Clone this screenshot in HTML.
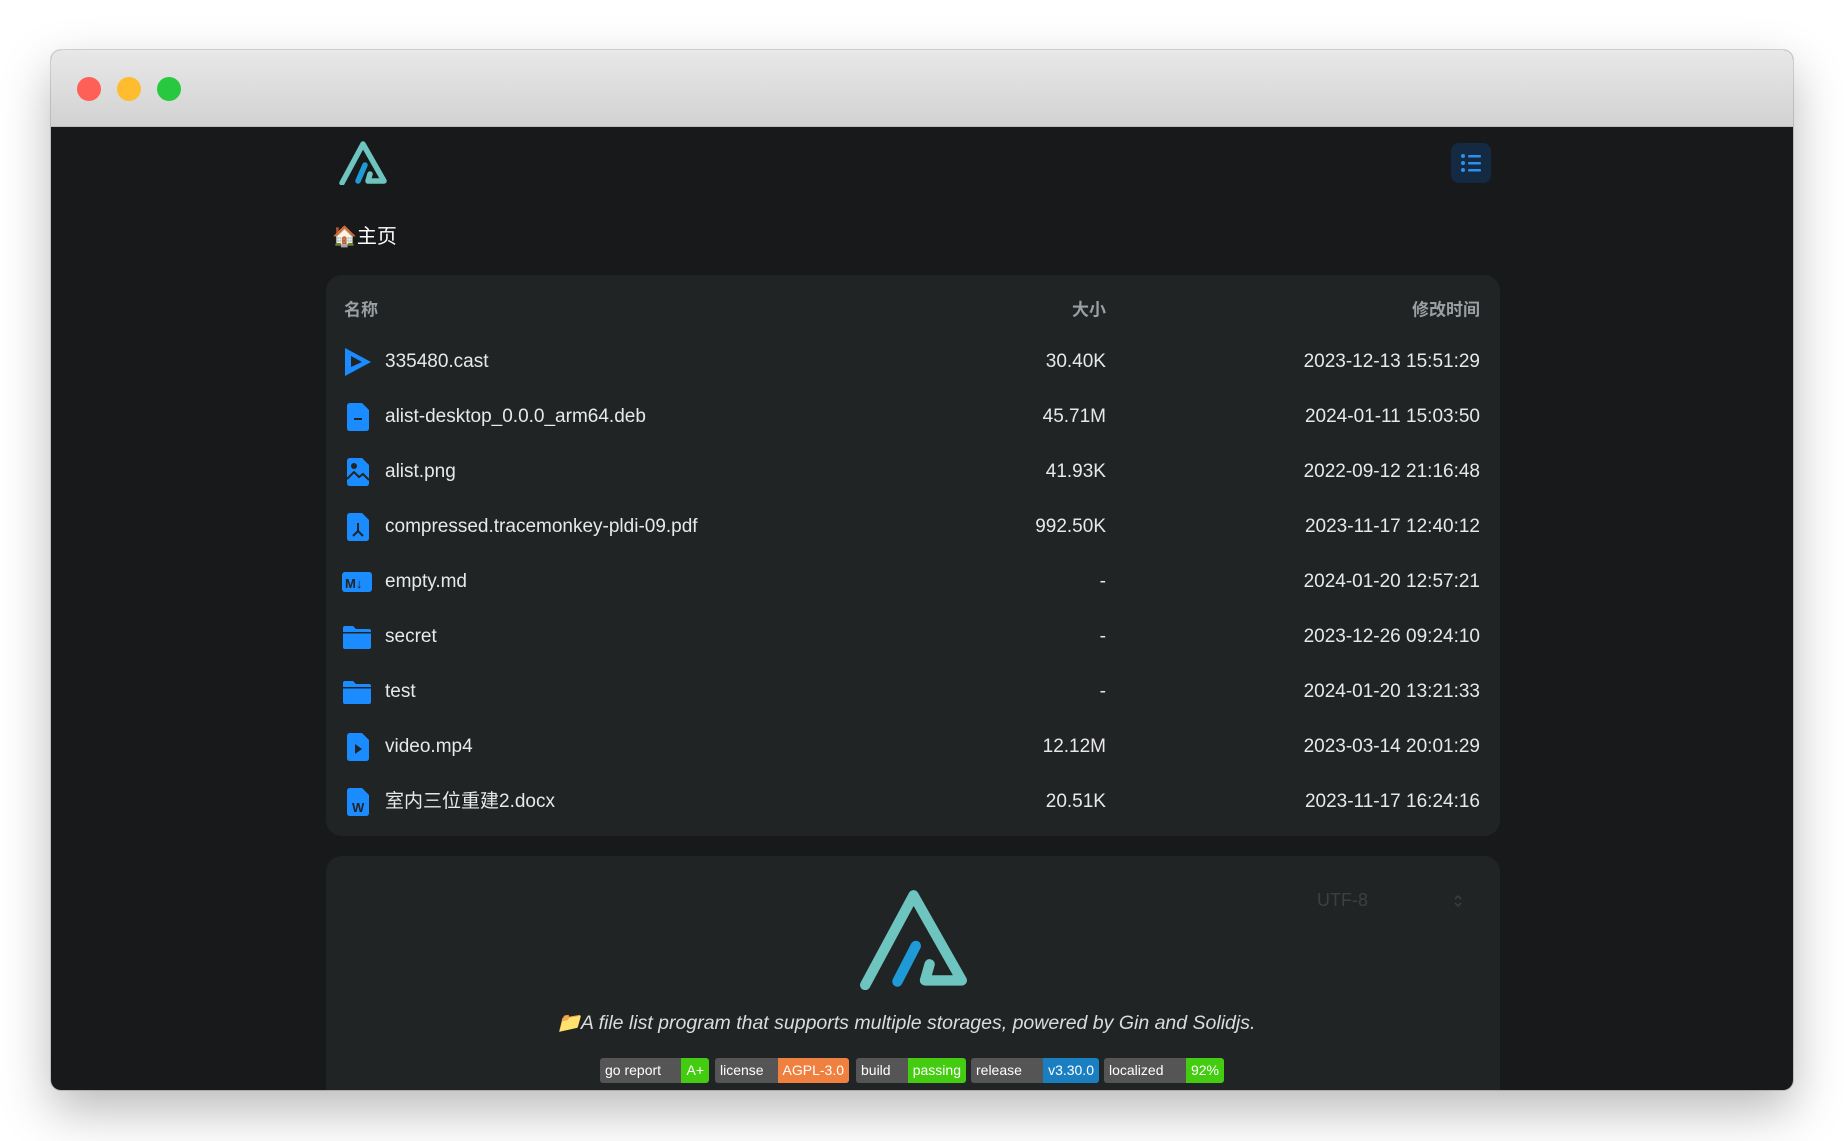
<!DOCTYPE html>
<html><head><meta charset="utf-8"><style>
*{margin:0;padding:0;box-sizing:border-box}
html,body{width:1844px;height:1141px;overflow:hidden;background:#fff;font-family:"Liberation Sans","Noto Sans CJK SC",sans-serif}
.win{position:absolute;left:51px;top:50px;width:1742px;height:1040px;border-radius:10px;overflow:hidden;box-shadow:0 20px 50px rgba(0,0,0,.28),0 0 0 1px rgba(0,0,0,.15);background:#18191b}
.bar{position:absolute;left:0;top:0;right:0;height:77px;background:linear-gradient(#e8e8e8,#d2d2d2);border-bottom:1px solid #bdbdbd}
.dot{position:absolute;top:27px;width:24px;height:24px;border-radius:50%}
.a{position:absolute}
.card{position:absolute;left:275px;width:1174px;background:#212425;border-radius:16px}
.row{position:absolute;left:0;width:1174px;height:55px;color:#e8e8e8;font-size:19px}
.row .n{position:absolute;left:59px;top:50%;transform:translateY(-50%);line-height:24px}
.row .s{position:absolute;right:394px;top:50%;transform:translateY(-50%)}
.row .d{position:absolute;right:20px;top:50%;transform:translateY(-50%)}
.row svg{position:absolute;left:18px;top:13px}
.hd{color:#9a9fa3;font-weight:bold;font-size:17px;line-height:normal!important}
.badge{position:absolute;top:1058px;height:25px;border-radius:3px;overflow:hidden;display:flex;font-size:14px;color:#fff;line-height:25px;white-space:nowrap}
.badge span{padding:0 5px}
.badge .l{background:#555}
</style></head><body>
<div class="win">
<div class="bar"><div class="dot" style="left:26px;background:#fe5f57"></div><div class="dot" style="left:66px;background:#febc2e"></div><div class="dot" style="left:106px;background:#28c840"></div></div>
<svg class="a" style="left:287px;top:91px" width="50" height="44" viewBox="0 0 100 88"><path d="M8 84 L50 6 L92 80 L60 80 L64 66" fill="none" stroke="#6ec4bf" stroke-width="11" stroke-linecap="round" stroke-linejoin="round"/><path d="M40 80 L54 48" stroke="#1e9bd7" stroke-width="11" stroke-linecap="round"/></svg>
<div class="a" style="left:1400px;top:93px;width:40px;height:40px;border-radius:8px;background:#142a42"></div>
<svg class="a" style="left:1409px;top:102px" width="22" height="22" viewBox="0 0 22 22"><g fill="#2d8ff0"><circle cx="3" cy="4" r="2"/><circle cx="3" cy="11" r="2"/><circle cx="3" cy="18" r="2"/><rect x="8" y="3" width="13" height="2.5" rx="1"/><rect x="8" y="10" width="13" height="2.5" rx="1"/><rect x="8" y="17" width="13" height="2.5" rx="1"/></g></svg>
<div class="a" style="left:281px;top:174px;color:#fff;font-size:20px;line-height:26px">🏠主页</div>

<div class="card" style="top:225px;height:561px">
<div class="row" style="top:5px"><span class="n hd" style="left:18px">名称</span><span class="s hd">大小</span><span class="d hd">修改时间</span></div>
<div class="row" style="top:59px"><svg width="28" height="30" viewBox="0 0 28 30"><path d="M1 1 L27 15 L1 29 Z M7 9 L7 20 L18 15 Z" fill="#1a8cff" fill-rule="evenodd"/></svg><span class="n">335480.cast</span><span class="s">30.40K</span><span class="d">2023-12-13 15:51:29</span></div>
<div class="row" style="top:114px"><svg width="28" height="30" viewBox="0 0 28 30"><path d="M6 1 H18 L25 8 V26 Q25 29 22 29 H6 Q3 29 3 26 V4 Q3 1 6 1Z" fill="#1a8cff"/><rect x="10" y="16" width="8" height="2" fill="#212425"/></svg><span class="n">alist-desktop_0.0.0_arm64.deb</span><span class="s">45.71M</span><span class="d">2024-01-11 15:03:50</span></div>
<div class="row" style="top:169px"><svg width="28" height="30" viewBox="0 0 28 30"><path d="M6 1 H18 L25 8 V26 Q25 29 22 29 H6 Q3 29 3 26 V4 Q3 1 6 1Z" fill="#1a8cff"/><circle cx="10" cy="9" r="3" fill="#212425"/><path d="M3 22 L10 15 L15 20 L19 17 L25 23" stroke="#212425" stroke-width="2" fill="none"/></svg><span class="n">alist.png</span><span class="s">41.93K</span><span class="d">2022-09-12 21:16:48</span></div>
<div class="row" style="top:224px"><svg width="28" height="30" viewBox="0 0 28 30"><path d="M6 1 H18 L25 8 V26 Q25 29 22 29 H6 Q3 29 3 26 V4 Q3 1 6 1Z" fill="#1a8cff"/><path d="M14 11 L14 19 M14 19 L9 24 M14 19 L19 24" stroke="#212425" stroke-width="2" fill="none"/></svg><span class="n">compressed.tracemonkey-pldi-09.pdf</span><span class="s">992.50K</span><span class="d">2023-11-17 12:40:12</span></div>
<div class="row" style="top:279px"><svg width="30" height="30" viewBox="0 0 30 30" style="left:16px"><rect x="0" y="5" width="30" height="20" rx="3" fill="#1a8cff"/><text x="3" y="21" font-size="13" font-family="Liberation Sans" font-weight="bold" fill="#212425">M↓</text></svg><span class="n">empty.md</span><span class="s">-</span><span class="d">2024-01-20 12:57:21</span></div>
<div class="row" style="top:334px"><svg width="30" height="30" viewBox="0 0 30 30" style="left:16px"><path d="M1 6 Q1 4 3 4 H11 L14 7 H27 Q29 7 29 9 V25 Q29 27 27 27 H3 Q1 27 1 25Z" fill="#1a8cff"/><rect x="1" y="10" width="28" height="1.5" fill="#212425"/></svg><span class="n">secret</span><span class="s">-</span><span class="d">2023-12-26 09:24:10</span></div>
<div class="row" style="top:389px"><svg width="30" height="30" viewBox="0 0 30 30" style="left:16px"><path d="M1 6 Q1 4 3 4 H11 L14 7 H27 Q29 7 29 9 V25 Q29 27 27 27 H3 Q1 27 1 25Z" fill="#1a8cff"/><rect x="1" y="10" width="28" height="1.5" fill="#212425"/></svg><span class="n">test</span><span class="s">-</span><span class="d">2024-01-20 13:21:33</span></div>
<div class="row" style="top:444px"><svg width="28" height="30" viewBox="0 0 28 30"><path d="M6 1 H18 L25 8 V26 Q25 29 22 29 H6 Q3 29 3 26 V4 Q3 1 6 1Z" fill="#1a8cff"/><path d="M11 12 L18 17 L11 22Z" fill="#212425"/></svg><span class="n">video.mp4</span><span class="s">12.12M</span><span class="d">2023-03-14 20:01:29</span></div>
<div class="row" style="top:499px"><svg width="28" height="30" viewBox="0 0 28 30"><path d="M6 1 H18 L25 8 V26 Q25 29 22 29 H6 Q3 29 3 26 V4 Q3 1 6 1Z" fill="#1a8cff"/><text x="8" y="25" font-size="13" font-family="Liberation Sans" font-weight="bold" fill="#212425">W</text></svg><span class="n">室内三位重建2.docx</span><span class="s">20.51K</span><span class="d">2023-11-17 16:24:16</span></div>
</div>

<div class="card" style="top:806px;height:300px"></div>
<div class="a" style="left:1266px;top:840px;color:#3c4043;font-size:18px">UTF-8</div>
<svg class="a" style="left:1402px;top:843px" width="10" height="16" viewBox="0 0 10 16"><path d="M2 6 L5 3 L8 6 M2 10 L5 13 L8 10" stroke="#3c4043" stroke-width="1.5" fill="none"/></svg>
<svg class="a" style="left:805px;top:838px" width="115" height="102" viewBox="0 0 100 88"><path d="M8 84 L50 6 L92 80 L60 80 L64 66" fill="none" stroke="#6ec4bf" stroke-width="9" stroke-linecap="round" stroke-linejoin="round"/><path d="M36 81 L52 50" stroke="#1e9bd7" stroke-width="9" stroke-linecap="round"/></svg>
<div class="a" style="left:-16px;width:1742px;top:961px;text-align:center;color:#dcdcdc;font-size:19.5px;font-style:italic">📁A file list program that supports multiple storages, powered by Gin and Solidjs.</div>
</div>
<div class="badge" style="left:600px;width:109px"><span class="l" style="flex:1">go report</span><span style="background:#4c1">A+</span></div>
<div class="badge" style="left:715px;width:134px"><span class="l" style="flex:1">license</span><span style="background:#f0803f">AGPL-3.0</span></div>
<div class="badge" style="left:856px;width:110px"><span class="l" style="flex:1">build</span><span style="background:#4c1">passing</span></div>
<div class="badge" style="left:971px;width:128px"><span class="l" style="flex:1">release</span><span style="background:#1a7fc1">v3.30.0</span></div>
<div class="badge" style="left:1104px;width:120px"><span class="l" style="flex:1">localized</span><span style="background:#4c1">92%</span></div>
</body></html>
